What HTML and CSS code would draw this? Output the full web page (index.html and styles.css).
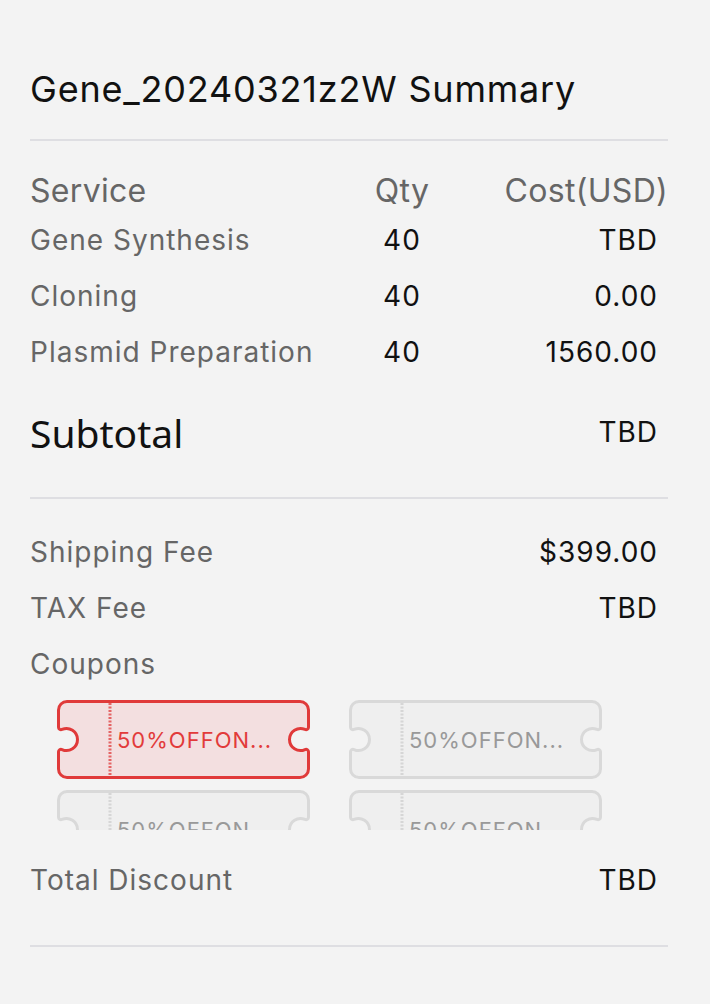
FILE: index.html
```html
<!DOCTYPE html>
<html>
<head>
<meta charset="utf-8">
<link rel="stylesheet" href="styles.css">
</head>
<body>
<div class="summary">
  <h1 class="title">Gene_20240321z2W Summary</h1>
  <div class="divider"></div>
  <div class="table">
    <div class="thead">
      <span class="c-service">Service</span>
      <span class="c-qty">Qty</span>
      <span class="c-cost">Cost(USD)</span>
    </div>
    <div class="trow">
      <span class="c-service">Gene Synthesis</span>
      <span class="c-qty">40</span>
      <span class="c-cost">TBD</span>
    </div>
    <div class="trow">
      <span class="c-service">Cloning</span>
      <span class="c-qty">40</span>
      <span class="c-cost">0.00</span>
    </div>
    <div class="trow">
      <span class="c-service">Plasmid Preparation</span>
      <span class="c-qty">40</span>
      <span class="c-cost">1560.00</span>
    </div>
  </div>
  <div class="subtotal">
    <span class="sub-label">Subtotal</span>
    <span class="sub-value">TBD</span>
  </div>
  <div class="divider d2"></div>
  <div class="line"><span class="lbl">Shipping Fee</span><span class="val">$399.00</span></div>
  <div class="line"><span class="lbl">TAX Fee</span><span class="val">TBD</span></div>
  <div class="line"><span class="lbl">Coupons</span></div>
  <div class="coupons">
    <div class="coupon active">
      <svg class="ticket" viewBox="0 0 253 79" width="253" height="79">
        <path d="M10 1.5 H243 A8.5 8.5 0 0 1 251.5 10 V27.17 A2.5 2.5 0 0 1 247.98 29.45 A11 11 0 1 0 247.98 49.55 A2.5 2.5 0 0 1 251.5 51.83 V69 A8.5 8.5 0 0 1 243 77.5 H10 A8.5 8.5 0 0 1 1.5 69 V51.83 A2.5 2.5 0 0 1 5.02 49.55 A11 11 0 1 0 5.02 29.45 A2.5 2.5 0 0 1 1.5 27.17 V10 A8.5 8.5 0 0 1 10 1.5 Z"/>
        <line x1="53" y1="3" x2="53" y2="76"/>
      </svg>
      <span class="ctext">50%OFFON...</span>
    </div>
    <div class="coupon">
      <svg class="ticket" viewBox="0 0 253 79" width="253" height="79">
        <path d="M10 1.5 H243 A8.5 8.5 0 0 1 251.5 10 V27.17 A2.5 2.5 0 0 1 247.98 29.45 A11 11 0 1 0 247.98 49.55 A2.5 2.5 0 0 1 251.5 51.83 V69 A8.5 8.5 0 0 1 243 77.5 H10 A8.5 8.5 0 0 1 1.5 69 V51.83 A2.5 2.5 0 0 1 5.02 49.55 A11 11 0 1 0 5.02 29.45 A2.5 2.5 0 0 1 1.5 27.17 V10 A8.5 8.5 0 0 1 10 1.5 Z"/>
        <line x1="53" y1="3" x2="53" y2="76"/>
      </svg>
      <span class="ctext">50%OFFON...</span>
    </div>
    <div class="coupon">
      <svg class="ticket" viewBox="0 0 253 79" width="253" height="79">
        <path d="M10 1.5 H243 A8.5 8.5 0 0 1 251.5 10 V27.17 A2.5 2.5 0 0 1 247.98 29.45 A11 11 0 1 0 247.98 49.55 A2.5 2.5 0 0 1 251.5 51.83 V69 A8.5 8.5 0 0 1 243 77.5 H10 A8.5 8.5 0 0 1 1.5 69 V51.83 A2.5 2.5 0 0 1 5.02 49.55 A11 11 0 1 0 5.02 29.45 A2.5 2.5 0 0 1 1.5 27.17 V10 A8.5 8.5 0 0 1 10 1.5 Z"/>
        <line x1="53" y1="3" x2="53" y2="76"/>
      </svg>
      <span class="ctext">50%OFFON...</span>
    </div>
    <div class="coupon">
      <svg class="ticket" viewBox="0 0 253 79" width="253" height="79">
        <path d="M10 1.5 H243 A8.5 8.5 0 0 1 251.5 10 V27.17 A2.5 2.5 0 0 1 247.98 29.45 A11 11 0 1 0 247.98 49.55 A2.5 2.5 0 0 1 251.5 51.83 V69 A8.5 8.5 0 0 1 243 77.5 H10 A8.5 8.5 0 0 1 1.5 69 V51.83 A2.5 2.5 0 0 1 5.02 49.55 A11 11 0 1 0 5.02 29.45 A2.5 2.5 0 0 1 1.5 27.17 V10 A8.5 8.5 0 0 1 10 1.5 Z"/>
        <line x1="53" y1="3" x2="53" y2="76"/>
      </svg>
      <span class="ctext">50%OFFON...</span>
    </div>
  </div>
  <div class="line total"><span class="lbl">Total Discount</span><span class="val">TBD</span></div>
  <div class="divider d3"></div>
</div>
</body>
</html>
```

FILE: styles.css
```css
html, body {
  margin: 0;
  padding: 0;
  background: #f3f3f3;
}
body {
  font-family: Inter, "Open Sans", sans-serif;
  color: #111;
}
.summary {
  padding: 67px 42px 0 30px;
}
.title {
  margin: 0;
  font-size: 36px;
  font-weight: 400;
  line-height: 44px;
  height: 44px;
  color: #111;
  letter-spacing: 0.8px;
}
.divider {
  height: 2px;
  background: #dedee2;
  margin-top: 28px;
}
.d2 { margin-top: 37px; }
.d3 { margin-top: 37px; }
.table {
  margin-top: 27px;
}
.thead, .trow {
  display: grid;
  grid-template-columns: 1fr 104px 214px;
  align-items: center;
}
.thead {
  height: 44px;
  font-size: 32px;
  color: #666;
  letter-spacing: 0.3px;
}
.trow {
  height: 56px;
  font-size: 28px;
  letter-spacing: 1px;
}
.trow .c-service { color: #666; }
.c-qty { text-align: center; }
.c-cost { text-align: right; }
.trow .c-cost { padding-right: 10px; }
.subtotal {
  margin-top: 24px;
  height: 56px;
  display: flex;
  align-items: center;
  justify-content: space-between;
}
.sub-label {
  font-family: "Noto Sans", "Open Sans", sans-serif;
  font-size: 39px;
  color: #111;
}
.sub-value {
  font-size: 28px;
  padding-right: 10px;
  letter-spacing: 1px;
}
.d2 + .line { margin-top: 25px; }
.line {
  height: 56px;
  display: flex;
  align-items: center;
  justify-content: space-between;
  font-size: 28px;
  letter-spacing: 1px;
}
.lbl { color: #666; }
.val { color: #111; padding-right: 10px; }
.coupons {
  margin-top: 8px;
  height: 130px;
  overflow: hidden;
  display: grid;
  grid-template-columns: 253px 253px;
  column-gap: 39px;
  row-gap: 11px;
  padding-left: 27px;
}
.coupon {
  position: relative;
  width: 253px;
  height: 79px;
  display: flex;
  align-items: center;
}
.ticket {
  position: absolute;
  left: 0;
  top: 0;
}
.ticket path {
  fill: #efefef;
  stroke: #d9d9d9;
  stroke-width: 3;
}
.ticket line {
  stroke: #d6d6d6;
  stroke-width: 3;
  stroke-dasharray: 2 1.5;
}
.coupon.active .ticket path {
  fill: #f3dfe0;
  stroke: #e03a3a;
}
.coupon.active .ticket line {
  stroke: #e46464;
}
.ctext {
  position: relative;
  margin-left: 60px;
  font-size: 22px;
  color: #999;
  letter-spacing: 1px;
}
.coupon.active .ctext { color: #e23b3b; }
.total { margin-top: 22px; }
```
